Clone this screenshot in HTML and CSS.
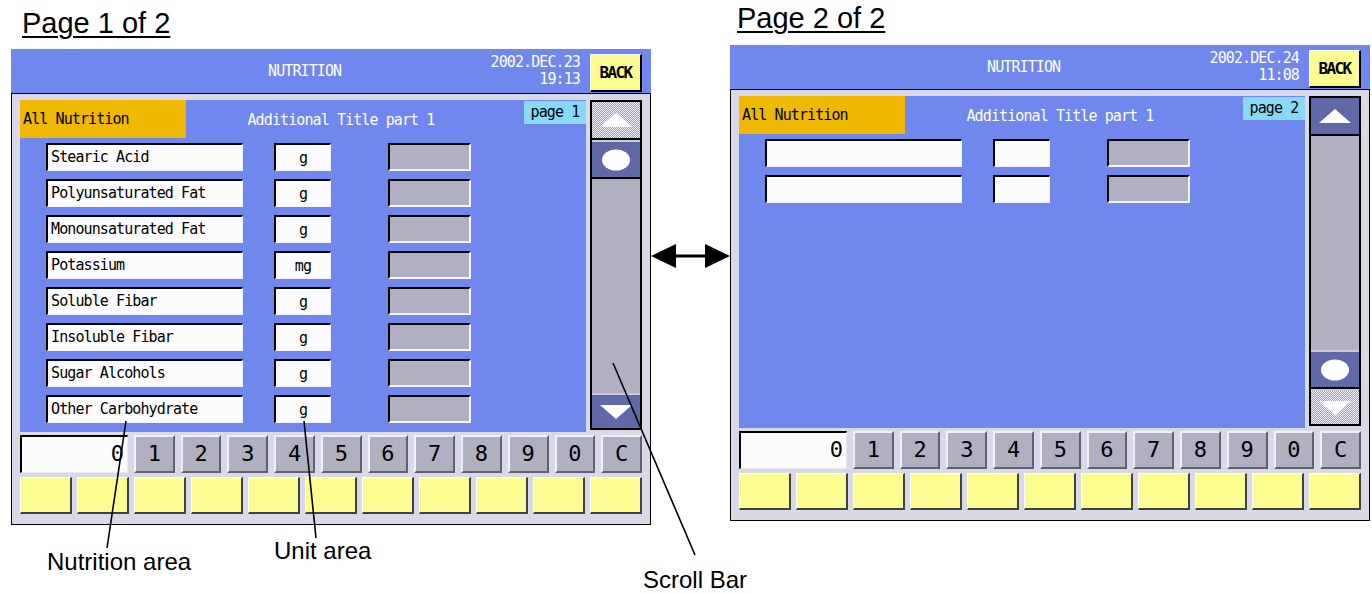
FILE: index.html
```html
<!DOCTYPE html>
<html lang="en">
<head>
  <meta charset="UTF-8" />
  <title>Nutrition screens</title>
  <link rel="stylesheet" href="styles.css">
</head>
<body>
<div class="stage">

  <div class="screens">

    <!-- page 1 -->
    <section class="col col-p1">
      <div class="page-title">Page 1 of 2</div>
      <div class="screen">
        <div class="bar">
          <div class="bar-title">NUTRITION</div>
          <div class="bar-date">2002.DEC.23<br>19:13</div>
          <div class="back">BACK</div>
        </div>
        <div class="panel">
          <div class="main">
            <div class="sheet">
              <div class="sheet-head">
                <div class="tab">All Nutrition</div>
                <div class="sheet-title">Additional Title part 1</div>
                <div class="page-tag">page 1</div>
              </div>
              <div class="rows">
                <div class="row"><div class="box nutr">Stearic Acid</div><div class="box unit">g</div><div class="box val"></div></div>
                <div class="row"><div class="box nutr">Polyunsaturated Fat</div><div class="box unit">g</div><div class="box val"></div></div>
                <div class="row"><div class="box nutr">Monounsaturated Fat</div><div class="box unit">g</div><div class="box val"></div></div>
                <div class="row"><div class="box nutr">Potassium</div><div class="box unit">mg</div><div class="box val"></div></div>
                <div class="row"><div class="box nutr">Soluble Fibar</div><div class="box unit">g</div><div class="box val"></div></div>
                <div class="row"><div class="box nutr">Insoluble Fibar</div><div class="box unit">g</div><div class="box val"></div></div>
                <div class="row"><div class="box nutr">Sugar Alcohols</div><div class="box unit">g</div><div class="box val"></div></div>
                <div class="row"><div class="box nutr">Other Carbohydrate</div><div class="box unit">g</div><div class="box val"></div></div>
              </div>
            </div>
            <div class="scroll">
              <div class="sbtn up off">
                <svg width="34" height="16" viewBox="0 0 34 16"><polygon points="17,1 33,15 1,15" fill="#fff"/></svg>
              </div>
              <div class="sbtn thumb">
                <svg width="30" height="22" viewBox="0 0 30 22"><ellipse cx="15" cy="11" rx="14" ry="10.5" fill="#fff"/></svg>
              </div>
              <div class="track"></div>
              <div class="sbtn down">
                <svg width="34" height="16" viewBox="0 0 34 16"><polygon points="1,1 33,1 17,15" fill="#fff"/></svg>
              </div>
            </div>
          </div>
          <div class="keys">
            <div class="display">0</div>
            <div class="key">1</div><div class="key">2</div><div class="key">3</div><div class="key">4</div>
            <div class="key">5</div><div class="key">6</div><div class="key">7</div><div class="key">8</div>
            <div class="key">9</div><div class="key">0</div><div class="key">C</div>
          </div>
          <div class="softkeys">
            <div class="soft"></div><div class="soft"></div><div class="soft"></div><div class="soft"></div>
            <div class="soft"></div><div class="soft"></div><div class="soft"></div><div class="soft"></div>
            <div class="soft"></div><div class="soft"></div><div class="soft"></div>
          </div>
        </div>
      </div>
    </section>

    <div class="swap">
      <svg width="80" height="26" viewBox="0 0 80 26">
        <rect x="20" y="11.5" width="40" height="3" fill="#000"/>
        <polygon points="0,13 25,1 25,25" fill="#000"/>
        <polygon points="79,13 54,1 54,25" fill="#000"/>
      </svg>
    </div>

    <!-- page 2 -->
    <section class="col col-p2">
      <div class="page-title">Page 2 of 2</div>
      <div class="screen">
        <div class="bar">
          <div class="bar-title">NUTRITION</div>
          <div class="bar-date">2002.DEC.24<br>11:08</div>
          <div class="back">BACK</div>
        </div>
        <div class="panel">
          <div class="main">
            <div class="sheet">
              <div class="sheet-head">
                <div class="tab">All Nutrition</div>
                <div class="sheet-title">Additional Title part 1</div>
                <div class="page-tag">page 2</div>
              </div>
              <div class="rows">
                <div class="row"><div class="box nutr"></div><div class="box unit"></div><div class="box val"></div></div>
                <div class="row"><div class="box nutr"></div><div class="box unit"></div><div class="box val"></div></div>
              </div>
            </div>
            <div class="scroll">
              <div class="sbtn up">
                <svg width="34" height="16" viewBox="0 0 34 16"><polygon points="17,1 33,15 1,15" fill="#fff"/></svg>
              </div>
              <div class="track"></div>
              <div class="sbtn thumb">
                <svg width="30" height="22" viewBox="0 0 30 22"><ellipse cx="15" cy="11" rx="14" ry="10.5" fill="#fff"/></svg>
              </div>
              <div class="sbtn down off">
                <svg width="34" height="16" viewBox="0 0 34 16"><polygon points="1,1 33,1 17,15" fill="#fff"/></svg>
              </div>
            </div>
          </div>
          <div class="keys">
            <div class="display">0</div>
            <div class="key">1</div><div class="key">2</div><div class="key">3</div><div class="key">4</div>
            <div class="key">5</div><div class="key">6</div><div class="key">7</div><div class="key">8</div>
            <div class="key">9</div><div class="key">0</div><div class="key">C</div>
          </div>
          <div class="softkeys">
            <div class="soft"></div><div class="soft"></div><div class="soft"></div><div class="soft"></div>
            <div class="soft"></div><div class="soft"></div><div class="soft"></div><div class="soft"></div>
            <div class="soft"></div><div class="soft"></div><div class="soft"></div>
          </div>
        </div>
      </div>
    </section>

  </div>

  <div class="notes">
    <div class="note note-nutr">Nutrition area</div>
    <div class="note note-unit">Unit area</div>
    <div class="note note-scroll">Scroll Bar</div>
  </div>

  <!-- leader lines from the labels to the parts -->
  <svg class="leaders" width="1372" height="593" viewBox="0 0 1372 593">
    <line x1="126" y1="421" x2="107" y2="548" stroke="#000" stroke-width="1.6"/>
    <line x1="304" y1="421" x2="316" y2="538" stroke="#000" stroke-width="1.6"/>
    <line x1="613" y1="363" x2="695" y2="555" stroke="#000" stroke-width="1.6"/>
  </svg>

</div>
</body>
</html>
```

FILE: styles.css
```css
html, body {
  margin: 0;
  height: 100%;
  overflow: hidden;
  background-color: #fff;
}

body {
  font-family: "Liberation Sans", Arial, sans-serif;
  color: #000;
}

.stage {
  position: relative;
  width: 1372px;
  height: 593px;
}

.screens {
  display: flex;
  align-items: flex-start;
  padding-left: 11px;
}

.col-p1 {
  padding-top: 6px;
}

.col-p2 {
  padding-top: 1px;
}

.page-title {
  font-size: 29px;
  line-height: 34px;
  text-decoration: underline;
  text-decoration-thickness: 2px;
  text-underline-offset: 3px;
}

.col-p1 .page-title {
  margin: 0 0 9px 11px;
}

.col-p2 .page-title {
  margin: 0 0 10px 7px;
}

.swap {
  width: 79px;
  margin-top: 243px;
}

.swap svg {
  display: block;
}

/* ---- the terminal screen ---- */

.screen {
  width: 640px;
  font-family: "DejaVu Sans Mono", monospace;
  font-size: 15px;
  letter-spacing: -0.9px;
}

.bar {
  height: 44px;
  background-color: #7088ee;
  color: #fff;
  display: flex;
  align-items: center;
}

.bar-title {
  flex: 1;
  margin-left: 257px;
}

.bar-date {
  text-align: right;
  line-height: 17px;
  margin-right: 10px;
}

.back {
  align-self: flex-end;
  box-sizing: border-box;
  width: 52px;
  height: 38px;
  margin: 0 9px 1px 0;
  background-color: #fcfc90;
  border-style: solid;
  border-width: 1px 2px 2px 1px;
  border-color: #fff #000 #000 #fff;
  color: #000;
  font-size: 16px;
  font-weight: bold;
  letter-spacing: -1.6px;
  display: flex;
  align-items: center;
  justify-content: center;
}

.panel {
  background-color: #d8d8e6;
  border: 1px solid #000;
  padding: 6px 8px 10px 8px;
}

.main {
  display: flex;
  gap: 4px;
  height: 332px;
}

.sheet {
  flex: 1;
  background-color: #7088ee;
}

.sheet-head {
  display: flex;
  height: 38px;
}

.tab {
  width: 166px;
  background-color: #f0b800;
  padding-left: 3px;
  line-height: 38px;
  box-sizing: border-box;
}

.sheet-title {
  flex: 1;
  color: #fff;
  text-align: center;
  padding-right: 28px;
  line-height: 40px;
}

.page-tag {
  align-self: flex-start;
  margin-top: 1px;
  width: 62px;
  height: 23px;
  line-height: 22px;
  background-color: #88d8f8;
  text-align: center;
}

.rows {
  display: flex;
  flex-direction: column;
  gap: 8px;
  padding: 5px 0 0 26px;
}

.row {
  display: flex;
  height: 28px;
}

.box {
  box-sizing: border-box;
  height: 28px;
  border-style: solid;
  border-width: 2px 1px 1px 2px;
  border-color: #000 #f4f4fc #f4f4fc #000;
  background-color: #fcfcfc;
  line-height: 24px;
}

.nutr {
  width: 197px;
  padding-left: 3px;
}

.unit {
  width: 57px;
  margin-left: 31px;
  text-align: center;
  line-height: 27px;
}

.val {
  width: 83px;
  margin-left: 57px;
  background-color: #b0b0c0;
  border-width: 2px 2px 2px 2px;
  border-color: #000 #f4f4fc #f4f4fc #000;
}

/* ---- scroll bar ---- */

.scroll {
  box-sizing: border-box;
  width: 52px;
  height: 330px;
  border: 2px solid #000;
  border-bottom: 0;
  background-color: #b0b0c0;
  display: flex;
  flex-direction: column;
}

.sbtn {
  box-sizing: border-box;
  background-color: #6068a8;
  display: flex;
  align-items: center;
  justify-content: center;
}

.sbtn svg {
  display: block;
}

.up {
  height: 38px;
  border-bottom: 2px solid #000;
}

.thumb {
  height: 39px;
  border-top: 2px solid #c8c8d8;
  border-bottom: 2px solid #000;
}

.down {
  height: 37px;
  border-top: 2px solid #c8c8d8;
  border-bottom: 2px solid #000;
}

.sbtn.off {
  background-color: #c4c8ea;
  background-image: repeating-conic-gradient(#98a0d8 0 25%, #f0f0fc 0 50%);
  background-size: 2px 2px;
}

.track {
  flex: 1;
}

/* ---- key rows ---- */

.keys {
  display: grid;
  grid-template-columns: 108px repeat(11, 1fr);
  gap: 6px;
  height: 38px;
  margin-top: 3px;
}

.display {
  box-sizing: border-box;
  background-color: #fcfcfc;
  border-style: solid;
  border-width: 2px 1px 1px 2px;
  border-color: #000 #e8e8f0 #e8e8f0 #000;
  text-align: right;
  padding-right: 3px;
  font-size: 22px;
  letter-spacing: 0;
  line-height: 34px;
}

.key {
  box-sizing: border-box;
  background-color: #b0b0c0;
  border-style: solid;
  border-width: 2px;
  border-color: #f0f0f8 #606070 #606070 #f0f0f8;
  text-align: center;
  font-size: 22px;
  letter-spacing: 0;
  line-height: 34px;
}

.softkeys {
  display: grid;
  grid-template-columns: repeat(11, 1fr);
  gap: 5px;
  height: 37px;
  margin-top: 4px;
}

.soft {
  box-sizing: border-box;
  background-color: #fcfc90;
  border-style: solid;
  border-width: 1px 2px 2px 1px;
  border-color: #fff #404048 #404048 #fff;
}

/* ---- callouts ---- */

.notes {
  display: grid;
  grid-template-columns: 227px 369px auto;
  padding-left: 47px;
  font-size: 24px;
  line-height: 28px;
}

.note-nutr {
  margin-top: 23px;
}

.note-unit {
  margin-top: 12px;
}

.note-scroll {
  margin-top: 41px;
}

.leaders {
  position: absolute;
  left: 0;
  top: 0;
  pointer-events: none;
}
```
